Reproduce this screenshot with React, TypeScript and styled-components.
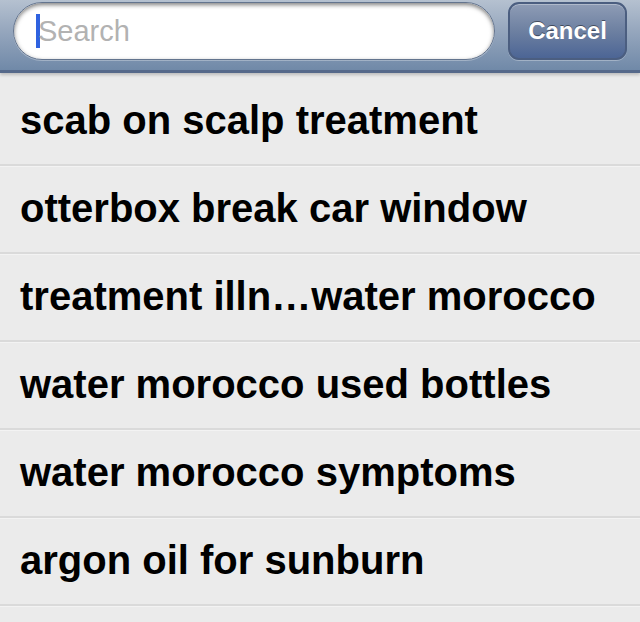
import React from "react";
import styled, { createGlobalStyle } from "styled-components";

const Global = createGlobalStyle`
  html, body { margin: 0; padding: 0; background: #ebebeb; }
  body { font-family: "Liberation Sans", Arial, sans-serif; overflow: hidden; }
`;

const Page = styled.div`
  width: 640px;
  height: 622px;
  background: #ebebeb;
  overflow: hidden;
`;

const Bar = styled.div`
  height: 73px;
  box-sizing: border-box;
  padding: 2px 13px 0 13px;
  display: flex;
  align-items: flex-start;
  gap: 13px;
  background: linear-gradient(#b5c1d0 0%, #95a6bd 45%, #7089a8 100%);
  border-bottom: 3px solid #56698a;
  box-shadow: 0 2px 3px rgba(0, 0, 0, 0.2);
  position: relative;
`;

const Field = styled.div`
  flex: 1;
  height: 58px;
  border-radius: 29px;
  background: #fff;
  box-shadow: inset 0 2px 4px rgba(0, 0, 0, 0.5), 0 1px 0 rgba(255, 255, 255, 0.3);
  border: 1px solid #63748e;
  box-sizing: border-box;
  display: flex;
  align-items: center;
  padding-left: 22px;
`;

const Caret = styled.span`
  width: 4px;
  height: 34px;
  background: #2f62e0;
  display: inline-block;
`;

const Placeholder = styled.span`
  font-family: "Liberation Sans", Arial, sans-serif;
  font-size: 29px;
  color: #b2b2b2;
  margin-left: -2px;
`;

const CancelButton = styled.div`
  width: 119px;
  height: 58px;
  box-sizing: border-box;
  border-radius: 11px;
  border: 2px solid #4b5e80;
  background: linear-gradient(#8e9cb5 0%, #6d80a1 50%, #4c6595 100%);
  box-shadow: inset 0 1px 0 rgba(255, 255, 255, 0.3), 0 1px 0 rgba(255, 255, 255, 0.3);
  display: flex;
  align-items: center;
  justify-content: center;
  color: #fff;
  font-weight: bold;
  font-size: 24px;
  text-shadow: 0 -1px 0 rgba(0, 0, 0, 0.45);
`;

const List = styled.div`
  display: flex;
  flex-direction: column;
  padding-top: 5px;
`;

const Row = styled.div`
  height: 88px;
  box-sizing: border-box;
  display: flex;
  align-items: center;
  padding: 0 20px 2px 20px;
  font-size: 40px;
  font-weight: bold;
  color: #000;
  border-bottom: 2px solid #dadada;
  box-shadow: 0 1px 0 #f3f3f3;
  white-space: nowrap;
`;

const items = [
  "scab on scalp treatment",
  "otterbox break car window",
  "treatment illn…water morocco",
  "water morocco used bottles",
  "water morocco symptoms",
  "argon oil for sunburn",
];

export default function App() {
  return (
    <Page>
      <Global />
      <Bar>
        <Field>
          <Caret />
          <Placeholder>Search</Placeholder>
        </Field>
        <CancelButton>Cancel</CancelButton>
      </Bar>
      <List>
        {items.map((t) => (
          <Row key={t}>{t}</Row>
        ))}
      </List>
    </Page>
  );
}
